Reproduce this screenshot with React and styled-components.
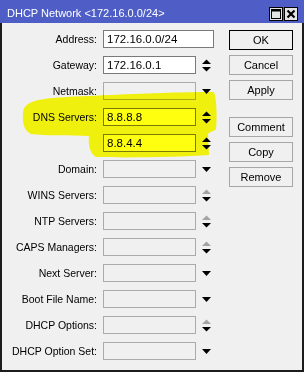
import React from 'react'
import styled, { createGlobalStyle } from "styled-components";

const GlobalStyle = createGlobalStyle`
  html, body {
    margin: 0;
    padding: 0;
    background: #ffffff;
  }
  body {
    font-family: "Liberation Sans", Arial, sans-serif;
  }
`

const rows = [
  { label: 'Address:', value: '172.16.0.0/24', wide: true, filled: true },
  { label: 'Gateway:', value: '172.16.0.1', filled: true, control: 'spin' },
  { label: 'Netmask:', control: 'drop' },
  { label: 'DNS Servers:', value: '8.8.8.8', filled: true, control: 'spin' },
  { label: '', value: '8.8.4.4', filled: true, control: 'spin' },
  { label: 'Domain:', control: 'drop' },
  { label: 'WINS Servers:', control: 'dim' },
  { label: 'NTP Servers:', control: 'dim' },
  { label: 'CAPS Managers:', control: 'dim' },
  { label: 'Next Server:', control: 'drop' },
  { label: 'Boot File Name:', control: 'drop' },
  { label: 'DHCP Options:', control: 'dim' },
  { label: 'DHCP Option Set:', control: 'drop' },
]

function Arrow({ type }) {
  if (!type) return null
  if (type === 'drop') {
    return (
      <ArrowBox>
        <svg width="9" height="13" viewBox="0 0 9 13">
          <polygon points="0,4 9,4 4.5,9" fill="#000" />
        </svg>
      </ArrowBox>
    )
  }
  const up = type === 'dim' ? '#a3a3a3' : '#000'
  return (
    <ArrowBox>
      <svg width="9" height="13" viewBox="0 0 9 13">
        <polygon points="0,5 4.5,0.5 9,5" fill={up} />
        <polygon points="0,8 9,8 4.5,12.5" fill="#000" />
      </svg>
    </ArrowBox>
  )
}

export default function App() {
  return (
    <Window>
      <GlobalStyle />
      <TitleBar>
        <Title>DHCP Network &lt;172.16.0.0/24&gt;</Title>
        <TitleButtons>
          <TitleButton>
            <svg width="10" height="10" viewBox="0 0 10 10">
              <rect x="0.5" y="0.5" width="9" height="9" fill="none" stroke="#000" strokeWidth="1" />
              <rect x="0.5" y="0.5" width="9" height="2" fill="#000" />
            </svg>
          </TitleButton>
          <TitleButton>
            <svg width="10" height="10" viewBox="0 0 10 10">
              <path d="M1.5 1.5 L8.5 8.5 M8.5 1.5 L1.5 8.5" stroke="#000" strokeWidth="2.2" />
            </svg>
          </TitleButton>
        </TitleButtons>
      </TitleBar>

      <Body>
        <Form>
          {rows.map((row, i) => (
            <React.Fragment key={i}>
              <Label>{row.label}</Label>
              <FieldCell>
                <Field $wide={row.wide} $filled={row.filled}>{row.value}</Field>
                <Arrow type={row.control} />
              </FieldCell>
            </React.Fragment>
          ))}
        </Form>

        <Buttons>
          <Button $primary>OK</Button>
          <Button>Cancel</Button>
          <Button>Apply</Button>
          <Spacer />
          <Button>Comment</Button>
          <Button>Copy</Button>
          <Button>Remove</Button>
        </Buttons>
      </Body>

      {/* marker highlight drawn over the DNS rows */}
      <Highlight width="304" height="375" viewBox="0 0 304 375">
        <path
          d="M30 103 C40 97 70 97 110 95 C150 93 190 92 214 92 C217 100 217 120 216 129
             C213 132 209 132 208 134 L209 155 C180 157 130 158 96 157
             C90 154 88 145 89 136 C70 135 45 136 31 134 C24 131 22 122 23 113 C23 108 26 105 30 103 Z"
          fill="#ffff10"
        />
      </Highlight>
    </Window>
  )
}

// ........ window ...........

const Window = styled.div`
  position: relative;
  width: 304px;
  height: 372px;
  display: flex;
  flex-direction: column;
`

const TitleBar = styled.div`
  height: 23px;
  background: #4f5ec6;
  display: flex;
  align-items: center;
  justify-content: space-between;
  padding: 0 6px 0 7px;
  box-sizing: border-box;
`

const Title = styled.span`
  color: #ffffff;
  font-size: 11px;
  padding-top: 3px;
`

const TitleButtons = styled.div`
  display: flex;
  gap: 1px;
  padding-top: 4px;
`

const TitleButton = styled.div`
  width: 12px;
  height: 12px;
  border: 1px solid #000;
  background: #e4e4e4;
  display: flex;
  align-items: center;
  justify-content: center;
`

// ........ body ...........

const Body = styled.div`
  flex: 1;
  display: flex;
  align-items: flex-start;
  background: #f0f0f0;
  border: 2px solid #1c1c1c;
  border-top: none;
  padding-top: 7px;
`

const Form = styled.div`
  display: grid;
  grid-template-columns: 95px 111px;
  grid-auto-rows: 18px;
  column-gap: 6px;
  row-gap: 8px;
`

const Label = styled.div`
  font-size: 10.5px;
  color: #000;
  text-align: right;
  line-height: 18px;
  white-space: nowrap;
`

const FieldCell = styled.div`
  display: flex;
  align-items: center;
`

const Field = styled.div`
  width: ${p => (p.$wide ? '111px' : '93px')};
  height: 18px;
  box-sizing: border-box;
  border: 1px solid ${p => (p.$filled ? '#7a7a7a' : '#ababab')};
  background: ${p => (p.$filled ? '#ffffff' : '#f0f0f0')};
  font-size: 11.5px;
  line-height: 16px;
  padding-left: 3px;
  color: #000;
`

const ArrowBox = styled.div`
  margin-left: 6px;
  width: 9px;
  height: 13px;
  display: flex;
`

const Buttons = styled.div`
  display: flex;
  flex-direction: column;
  gap: 5px;
  margin-left: 15px;
`

const Spacer = styled.div`
  height: 7px;
`

const Button = styled.div`
  width: 64px;
  height: 20px;
  box-sizing: border-box;
  border: 1px solid ${p => (p.$primary ? '#000' : '#a6a6a6')};
  background: #f0f0f0;
  font-size: 11px;
  color: #000;
  display: flex;
  align-items: center;
  justify-content: center;
`

const Highlight = styled.svg`
  position: absolute;
  left: 0;
  top: 0;
  pointer-events: none;
  mix-blend-mode: multiply;
`
